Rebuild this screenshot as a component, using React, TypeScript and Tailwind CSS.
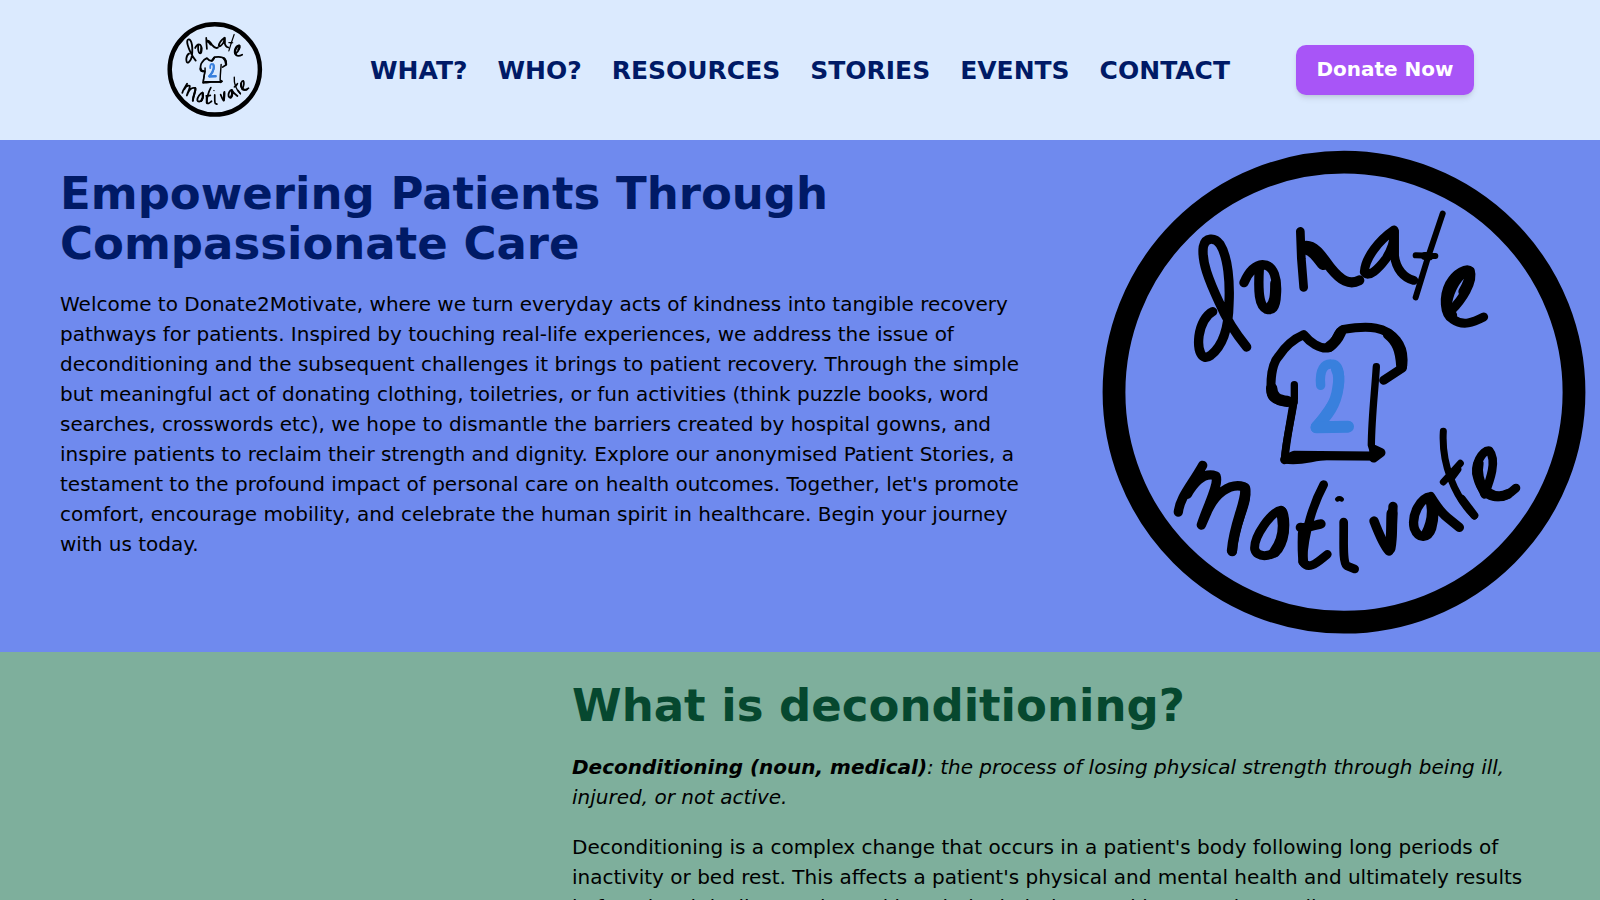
const nav = ["WHAT?", "WHO?", "RESOURCES", "STORIES", "EVENTS", "CONTACT"];

function Logo({ className }: { className: string }) {
  return (
    <svg viewBox="0 0 510 510" className={className} fill="none" stroke="#000" strokeLinecap="round" strokeLinejoin="round" role="img" aria-label="Donate 2 Motivate">
      <circle cx="254" cy="252.2" r="230" strokeWidth="22.8" />
      <g transform="translate(90 60) scale(.33333)" strokeWidth="27">
        <path d="M200 441 C168 402 140 360 118 308 C86 240 64 184 70 140 C76 112 104 111 120 133 C145 172 150 250 147 310 C146 380 128 438 92 466 C64 486 52 450 57 408 C62 372 78 345 98 335" strokeWidth="28" />
        <path d="M192 248 C206 215 222 196 248 194 C283 194 293 240 289 285 C288 325 275 332 260 328 C236 318 234 275 238 205" strokeWidth="28" />
        <path d="M286 250 C286 285 285 310 268 325" strokeWidth="31" />
        <path d="M361 94 L364 175 L371 262" strokeWidth="26" />
        <path d="M374 138 C405 133 428 172 452 204 C482 241 508 257 538 241" strokeWidth="30" />
        <path d="M376 144 C397 144 411 164 430 190" strokeWidth="40" />
        <path d="M642 90 C598 120 556 172 553 216 C565 236 596 206 618 176 C634 150 645 120 643 92 L643 165 C648 208 672 234 701 241" strokeWidth="27" />
        <path d="M642 96 L642 165" strokeWidth="29" />
        <path d="M788 41 L743 175 L707 292 M707 166 L766 168" strokeWidth="18" />
        <path d="M735 168 L748 169" strokeWidth="24" />
        <path d="M815 330 C845 300 882 245 871 213 C860 202 828 218 809 251 C789 290 792 342 817 357 C850 380 880 367 911 351" strokeWidth="27" />
        <path d="M862 214 C836 220 808 262 800 312 C801 330 806 340 816 346" strokeWidth="31" />
        <path d="M868 214 C873 232 862 254 850 275" strokeWidth="30" />
      </g>
      <g transform="translate(160 170) scale(.33333)">
        <path d="M133 224 L133 267 C125 330 108 380 103 449 C150 459 190 440 230 440 L375 440 L364 405 C365 320 374 250 379 170" strokeWidth="22" />
        <path d="M128 290 C120 340 110 390 105 440" strokeWidth="23" />
        <path d="M104 449 L132 436 L365 438" strokeWidth="27" />
        <path d="M372 418 L393 428 L371 444 Z" fill="#000" strokeWidth="27" />
        <path d="M130 276 C90 277 64 270 63 245 C62 205 64 165 85 140 C105 110 135 85 161 74 C177 94 210 120 238 113 C258 104 259 65 280 58 C360 45 407 50 440 91 C460 116 462 145 457 174 L401 211" strokeWidth="27" />
        <path d="M65 235 C66 260 82 271 112 274" strokeWidth="34" />
        <path d="M272 68 C265 84 255 98 238 110" strokeWidth="32" />
        <path d="M415 73 C442 95 452 120 455 168" strokeWidth="33" />
        <path d="M212 226 C207 177 225 161 243 162 C272 162 272 205 264 243 C254 286 217 320 196 354 C231 356 261 352 296 348" stroke="#3980dd" strokeWidth="28" />
        <path d="M199 350 C231 318 258 284 264 232 C268 210 266 190 260 178" stroke="#3980dd" strokeWidth="34" />
        <path d="M200 352 L294 350" stroke="#3980dd" strokeWidth="36" />
      </g>
      <g transform="translate(70 280) scale(.33333)" strokeWidth="27">
        <path d="M55 276 C60 232 93 198 128 136 M82 223 C111 174 140 157 168 168 C178 194 145 250 124 315 L139 281 C164 220 210 188 251 200 C275 240 219 306 217 395" strokeWidth="28" />
        <path d="M255 204 C264 236 222 310 216 392" strokeWidth="31" />
        <path d="M364 271 C333 275 281 350 284 387 C291 414 331 413 355 388 C384 343 375 277 364 271 Z" />
        <path d="M364 275 C376 320 370 360 344 396" strokeWidth="33" />
        <path d="M491 194 C461 250 432 335 428 425 C447 454 475 424 502 403" strokeWidth="26" />
        <path d="M421 322 C445 327 466 313 483 312" strokeWidth="28" />
        <path d="M428 340 C427 370 427 400 430 425" strokeWidth="29" />
        <path d="M532 238 Q538 233 545 238" strokeWidth="14" />
        <path d="M551 306 C552 366 547 423 560 437 L584 447" strokeWidth="26" />
        <path d="M642 303 C658 345 674 379 687 393 C698 365 697 300 699 259" strokeWidth="28" />
        <path d="M690 385 C697 350 694 310 696 280" strokeWidth="33" />
        <path d="M812 230 C781 234 753 285 763 325 C776 359 805 355 815 325 C826 285 822 248 812 230 C827 254 843 278 862 293 L898 322" strokeWidth="28" />
        <path d="M810 236 C821 270 815 310 798 343" strokeWidth="31" />
        <path d="M850 34 C844 130 883 229 943 288 M850 186 L901 130" strokeWidth="21" />
        <path d="M872 175 L892 148 M905 236 L943 286" strokeWidth="24" />
        <path d="M974 223 C990 181 1012 121 988 92 C967 88 940 138 952 172 C970 240 1023 247 1068 204" strokeWidth="26" />
        <path d="M956 130 C948 165 962 195 974 218 M984 218 C1004 231 1024 232 1044 222" strokeWidth="30" />
      </g>
    </svg>
  );
}

export default function App() {
  return (
    <div className="h-[900px] overflow-hidden font-['DejaVu_Sans',sans-serif] text-black">
      <header className="flex h-[140px] items-center bg-[#dbeafe]">
        <Logo className="ml-[165px] h-[100px] w-[100px] shrink-0" />
        <nav className="ml-[105px] flex w-[860px] justify-between pt-px text-[25px] font-bold text-[#001a66]">
          {nav.map((item) => <a key={item} href="#" className="whitespace-nowrap">{item}</a>)}
        </nav>
        <button className="ml-[66px] h-[50px] w-[178px] shrink-0 whitespace-nowrap rounded-[10px] bg-[#a855f7] pb-0.5 text-[20px] font-bold text-white shadow-md">Donate Now</button>
      </header>
      <section className="flex h-[512px] items-start justify-between bg-[#6f8aee]">
        <div className="ml-[60px] w-[970px] pt-[29px]">
          <h1 className="text-[45px] leading-[50px] font-bold text-[#001a66]">Empowering Patients Through<br />Compassionate Care</h1>
          <p className="mt-5 text-[20px] leading-[30px]">Welcome to Donate2Motivate, where we turn everyday acts of kindness into tangible recovery pathways for patients. Inspired by touching real-life experiences, we address the issue of deconditioning and the subsequent challenges it brings to patient recovery. Through the simple but meaningful act of donating clothing, toiletries, or fun activities (think puzzle books, word searches, crosswords etc), we hope to dismantle the barriers created by hospital gowns, and inspire patients to reclaim their strength and dignity. Explore our anonymised Patient Stories, a testament to the profound impact of personal care on health outcomes. Together, let's promote comfort, encourage mobility, and celebrate the human spirit in healthcare. Begin your journey with us today.</p>
        </div>
        <Logo className="h-[510px] w-[510px] shrink-0" />
      </section>
      <section className="h-[400px] bg-[#7eaf9c] pt-[29px] pl-[572px]">
        <div className="w-[970px]">
          <h2 className="text-[45px] leading-[50px] font-bold text-[#06482f]">What is deconditioning?</h2>
          <p className="mt-[21px] text-[20px] leading-[30px] italic"><strong>Deconditioning (noun, medical)</strong>: the process of losing physical strength through being ill, injured, or not active.</p>
          <p className="mt-5 text-[20px] leading-[30px]">Deconditioning is a complex change that occurs in a patient's body following long periods of inactivity or bed rest. This affects a patient's physical and mental health and ultimately results in functional decline, prolonged hospital admissions and increased mortality.</p>
        </div>
      </section>
    </div>
  );
}
